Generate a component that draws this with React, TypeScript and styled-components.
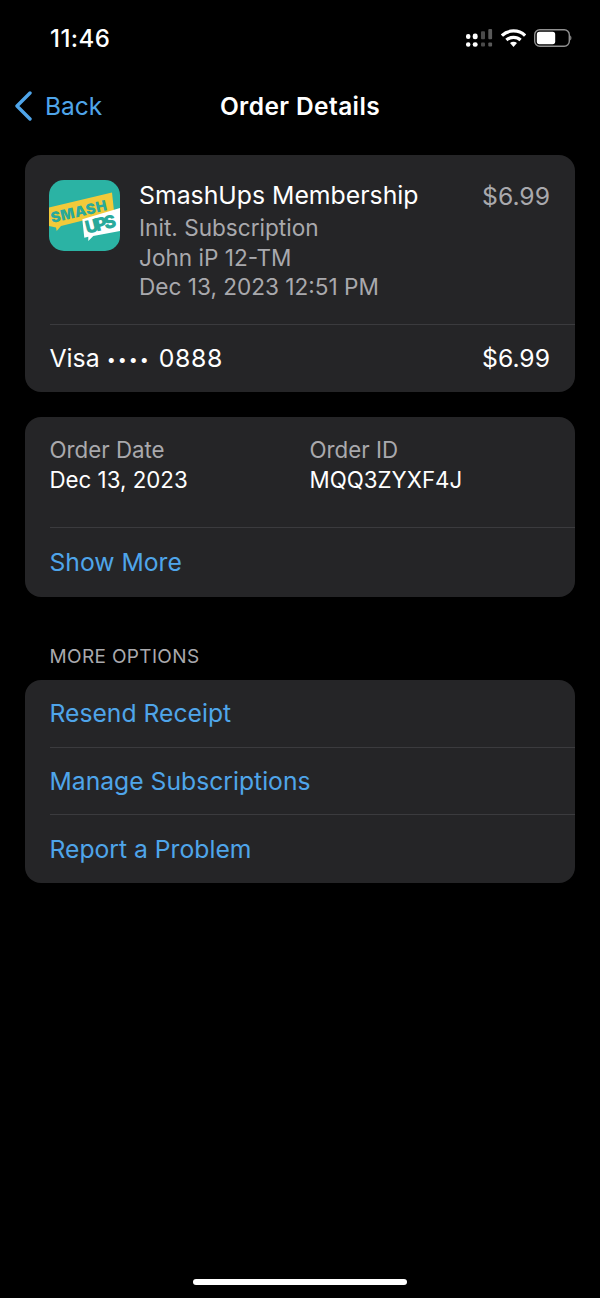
import React from 'react';
import styled, { createGlobalStyle } from 'styled-components';

const GlobalStyle = createGlobalStyle`
  html, body {
    margin: 0;
    padding: 0;
    background: #000;
  }
  body {
    font-family: Inter, "Liberation Sans", sans-serif;
    -webkit-font-smoothing: antialiased;
  }
  * {
    box-sizing: border-box;
  }
`;

const Page = styled.div`
  width: 600px;
  height: 1298px;
  background: #000;
  color: #fff;
  display: flex;
  flex-direction: column;
  overflow: hidden;
`;

const StatusBar = styled.div`
  height: 76px;
  padding: 0 28px 0 50px;
  display: flex;
  align-items: center;
  justify-content: space-between;
`;

const Time = styled.span`
  font-size: 24px;
  font-weight: 500;
  letter-spacing: 0.45px;
`;

const StatusIcons = styled.div`
  display: flex;
  align-items: center;
  gap: 8px;
`;

const NavBar = styled.div`
  height: 60px;
  position: relative;
  display: flex;
  align-items: center;
  justify-content: center;
`;

const BackLink = styled.div`
  position: absolute;
  left: 14px;
  top: 15px;
  display: flex;
  align-items: center;
  gap: 12px;
  font-size: 24.5px;
  color: #4fa5ea;
`;

const NavTitle = styled.div`
  font-size: 24.5px;
  font-weight: 600;
  letter-spacing: 0.4px;
`;

const Content = styled.div`
  padding: 19px 25px 0;
  display: flex;
  flex-direction: column;
`;

const Card = styled.div<{ $gap?: number }>`
  background: #252527;
  border-radius: 16px;
  margin-bottom: ${({ $gap }) => $gap ?? 0}px;
  overflow: hidden;
`;

const ProductRow = styled.div`
  height: 169px;
  padding: 25px 25px 0 24px;
  display: flex;
  align-items: flex-start;
`;

const ProductInfo = styled.div`
  flex: 1;
  margin-left: 19px;
`;

const ProductName = styled.div`
  font-size: 24.8px;
  line-height: 31px;
  margin-bottom: 2px;
  color: #fff;
`;

const ProductLine = styled.div`
  font-size: 22.6px;
  line-height: 29.5px;
  color: #a9a9ad;
`;

const Price = styled.div<{ $muted?: boolean }>`
  font-size: 24.7px;
  line-height: 33px;
  color: ${({ $muted }) => ($muted ? '#a9a9ad' : '#fff')};
`;

const Divider = styled.div`
  height: 1px;
  margin-left: 25px;
  background: #3b3b3e;
`;

const TotalRow = styled.div`
  height: 67px;
  padding: 0 25px 1px 24.5px;
  display: flex;
  align-items: center;
  justify-content: space-between;
  font-size: 24.8px;
`;

const Dots = styled.span`
  font-size: 16px;
  letter-spacing: 2px;
  margin: 0 8px 0 7px;
  vertical-align: 2px;
`;

const CardDigits = styled.span`
  letter-spacing: 0.7px;
`;

const MetaGrid = styled.div`
  height: 110px;
  padding: 18px 24.5px 0;
  display: grid;
  grid-template-columns: 260px 1fr;
  align-content: start;
`;

const MetaLabel = styled.div`
  font-size: 22.3px;
  line-height: 30px;
  color: #a9a9ad;
`;

const MetaValue = styled.div`
  font-size: 22.3px;
  line-height: 30px;
  color: #fff;
`;

const LinkRow = styled.div<{ $height: number; $lift?: number }>`
  height: ${({ $height }) => $height}px;
  padding: 0 24.5px ${({ $lift }) => $lift ?? 0}px;
  display: flex;
  align-items: center;
  font-size: 24.7px;
  color: #4fa5ea;
`;

const SectionLabel = styled.div`
  padding: 0 24.5px 12px;
  height: 83px;
  display: flex;
  align-items: flex-end;
  font-size: 19px;
  color: #a9a9ad;
  letter-spacing: 0.35px;
`;

const HomeIndicator = styled.div`
  margin: auto auto 13px;
  width: 214px;
  height: 6px;
  border-radius: 3px;
  background: #fff;
`;

const CellularIcon = () => (
  <svg width="27" height="18" viewBox="0 0 27 18">
    <rect x="0" y="5" width="4.4" height="5" rx="2.1" fill="#fff" />
    <rect x="6.7" y="4.6" width="5" height="5.6" rx="2.3" fill="#fff" />
    <rect x="0" y="13.2" width="4.4" height="4.6" rx="2.1" fill="#fff" />
    <rect x="6.7" y="13.2" width="5" height="4.6" rx="2.3" fill="#fff" />
    <rect x="15" y="2.3" width="4" height="7.9" rx="1" fill="#4a4a4a" />
    <rect x="15" y="13.4" width="4" height="4.2" rx="1" fill="#4a4a4a" />
    <rect x="22.3" y="0" width="3.8" height="10.2" rx="1" fill="#5a5a5a" />
    <rect x="22.3" y="13.4" width="3.8" height="4.2" rx="1" fill="#5a5a5a" />
  </svg>
);

const WifiIcon = () => (
  <svg width="25" height="18" viewBox="0 0 25 18">
    <path d="M0.9 6.6 C7 0.4 18 0.4 24.1 6.6" fill="none" stroke="#fff" strokeWidth="3.2" />
    <path d="M5.4 11 C9.2 7.4 15.8 7.4 19.6 11" fill="none" stroke="#fff" strokeWidth="3.2" />
    <path d="M9 14 C11 12.4 14 12.4 16 14 L12.5 18 Z" fill="#fff" />
  </svg>
);

const BatteryIcon = () => (
  <svg width="38" height="18" viewBox="0 0 38 18">
    <rect x="0.7" y="0.7" width="34.6" height="16.6" rx="5" fill="none" stroke="#909090" strokeWidth="1.4" />
    <rect x="2.8" y="2.8" width="18.4" height="12.4" rx="2.6" fill="#fff" />
    <path d="M36.2 6.6 C37.8 7.2 37.8 10.8 36.2 11.4 Z" fill="#909090" />
  </svg>
);

const BackChevron = () => (
  <svg width="19" height="30" viewBox="0 0 19 30">
    <path d="M16 2 L3 15 L16 28" fill="none" stroke="#4fa5ea" strokeWidth="3.4" strokeLinecap="round" strokeLinejoin="round" />
  </svg>
);

const AppLogo = () => (
  <svg width="71" height="71" viewBox="0 0 71 71" style={{ flexShrink: 0 }}>
    <defs>
      <clipPath id="logo-clip">
        <rect width="71" height="71" rx="15" />
      </clipPath>
    </defs>
    <g clipPath="url(#logo-clip)">
      <rect width="71" height="71" fill="#2bb3a4" />
      <path d="M0 27.5 L63 12.5 L65 31 L36 40 L12 46 L7.7 51 L7 47.5 L0 46 Z" fill="#f2ca3a" />
      <text
        x="3"
        y="43"
        fontFamily="Inter, sans-serif"
        fontWeight="900"
        fontSize="14.5"
        fill="#2aa99b"
        textLength="57"
        lengthAdjust="spacing"
        transform="rotate(-13 3 43)"
      >
        SMASH
      </text>
      <path d="M33.3 39.3 L71 28 L71 51 L44.3 56 L39.3 61 L39.3 56.7 L35.3 57.7 Z" fill="#fff" />
      <text
        x="38"
        y="54"
        fontFamily="Inter, sans-serif"
        fontWeight="900"
        fontSize="18"
        fill="#2aa99b"
        textLength="31"
        lengthAdjust="spacing"
        transform="rotate(-14 38 54)"
      >
        UPS
      </text>
    </g>
  </svg>
);

const App: React.FC = () => {
  return (
    <Page>
      <GlobalStyle />
      <StatusBar>
        <Time>11:46</Time>
        <StatusIcons>
          <CellularIcon />
          <WifiIcon />
          <BatteryIcon />
        </StatusIcons>
      </StatusBar>
      <NavBar>
        <BackLink>
          <BackChevron />
          Back
        </BackLink>
        <NavTitle>Order Details</NavTitle>
      </NavBar>
      <Content>
        <Card $gap={25}>
          <ProductRow>
            <AppLogo />
            <ProductInfo>
              <ProductName>SmashUps Membership</ProductName>
              <ProductLine>Init. Subscription</ProductLine>
              <ProductLine>John iP 12-TM</ProductLine>
              <ProductLine>Dec 13, 2023 12:51 PM</ProductLine>
            </ProductInfo>
            <Price $muted>$6.99</Price>
          </ProductRow>
          <Divider />
          <TotalRow>
            <span>
              Visa<Dots>••••</Dots>
              <CardDigits>0888</CardDigits>
            </span>
            <Price>$6.99</Price>
          </TotalRow>
        </Card>
        <Card>
          <MetaGrid>
            <MetaLabel>Order Date</MetaLabel>
            <MetaLabel>Order ID</MetaLabel>
            <MetaValue>Dec 13, 2023</MetaValue>
            <MetaValue>MQQ3ZYXF4J</MetaValue>
          </MetaGrid>
          <Divider />
          <LinkRow $height={69} $lift={1}>Show More</LinkRow>
        </Card>
        <SectionLabel>MORE OPTIONS</SectionLabel>
        <Card>
          <LinkRow $height={67} $lift={2}>Resend Receipt</LinkRow>
          <Divider />
          <LinkRow $height={66}>Manage Subscriptions</LinkRow>
          <Divider />
          <LinkRow $height={68}>Report a Problem</LinkRow>
        </Card>
      </Content>
      <HomeIndicator />
    </Page>
  );
};

export default App;
